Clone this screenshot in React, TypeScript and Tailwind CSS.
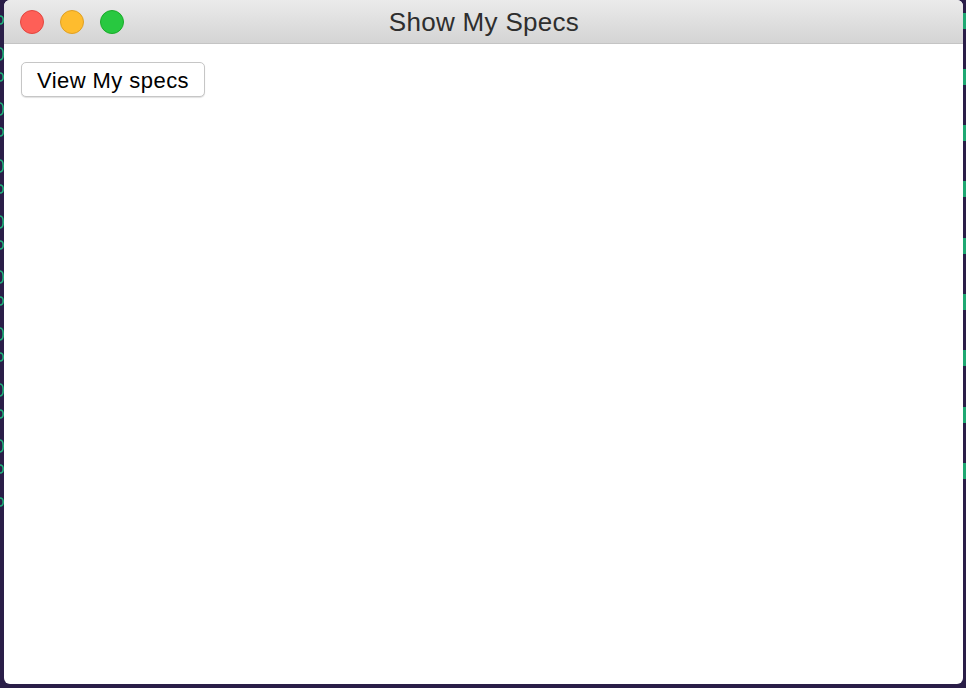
import React from "react";

const tall = [54, 109, 166, 222, 277, 334, 390, 446];
const short = [20, 77, 132, 189, 245, 301, 357, 414, 469, 502];
const rightSegs = [13, 69, 125, 181, 238, 294, 350, 407, 463];

function Light({ bg, border }: { bg: string; border: string }) {
  return (
    <span
      className="block w-[24px] h-[24px] rounded-full border"
      style={{ backgroundColor: bg, borderColor: border }}
    />
  );
}

export default function App() {
  return (
    <div className="relative w-[966px] h-[688px] overflow-hidden bg-[#2a1e48] pl-[4px] pr-[3px] pb-[4px]">
      {/* terminal glyph fragments behind the window */}
      <svg className="absolute left-0 top-0" width="4" height="688" aria-hidden>
        {tall.map((y) => (
          <path
            key={"t" + y}
            d={`M0 ${y - 6} Q3.2 ${y - 6} 3.2 ${y} Q3.2 ${y + 6} 0 ${y + 6}`}
            fill="none"
            stroke="#1fb27a"
            strokeWidth="1.6"
          />
        ))}
        {short.map((y) => (
          <path
            key={"s" + y}
            d={`M0 ${y - 4} Q3.2 ${y - 4} 3.2 ${y} Q3.2 ${y + 4} 0 ${y + 4}`}
            fill="none"
            stroke="#1fb27a"
            strokeWidth="1.6"
          />
        ))}
      </svg>
      {rightSegs.map((y) => (
        <div
          key={y}
          className="absolute right-0 w-[3px] h-[16px] bg-[#1fa872]"
          style={{ top: y }}
        />
      ))}

      <div className="relative flex flex-col h-full rounded-[6px] overflow-hidden bg-white">
        <div className="relative flex items-center h-[44px] shrink-0 border-b border-[#c4c4c4] bg-gradient-to-b from-[#ebebeb] to-[#d4d4d4]">
          <div className="flex items-center gap-[16px] pl-[16px]">
            <Light bg="#fe5f57" border="#e2463f" />
            <Light bg="#febc2e" border="#dfa024" />
            <Light bg="#28c840" border="#1aab29" />
          </div>
          <div
            className="absolute inset-0 flex items-center justify-center pl-[1px] pt-[2px] text-[26px] text-[#2e2e2e] tracking-[0.3px]"
            style={{ fontFamily: '"Liberation Sans", Arial, sans-serif' }}
          >
            Show My Specs
          </div>
        </div>
        <div className="flex-1 pt-[18px] pl-[17px]">
          <button
            className="flex items-center justify-center w-[184px] h-[35px] rounded-[5px] border border-[#c6c6c6] bg-white shadow-[0_1px_1px_rgba(0,0,0,0.12)] text-[22px] text-black tracking-[0.45px] pt-[2px]"
            style={{ fontFamily: '"Liberation Sans", Arial, sans-serif' }}
          >
            View My specs
          </button>
        </div>
      </div>
    </div>
  );
}
